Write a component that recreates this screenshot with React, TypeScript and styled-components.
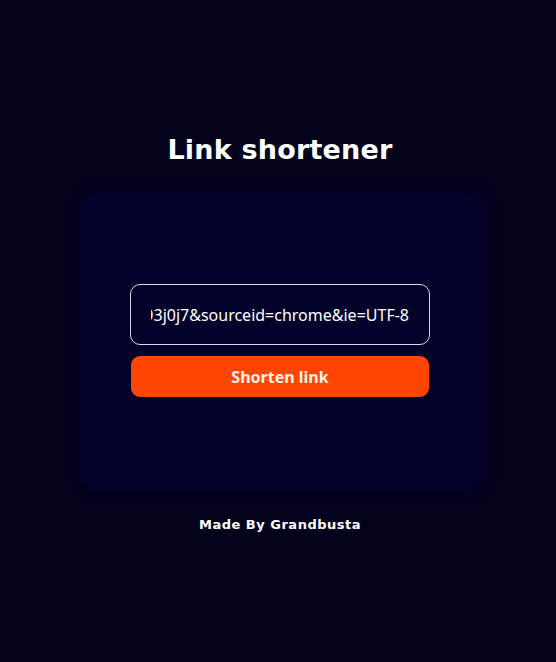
import React from "react";
import styled, { createGlobalStyle } from "styled-components";

const Global = createGlobalStyle`
  html, body { margin: 0; padding: 0; background: #03021d; }
  body { min-height: 662px; }
`;

const Page = styled.main`
  min-height: 662px;
  display: flex;
  flex-direction: column;
  align-items: center;
  padding-top: 130px;
  padding-left: 4px;
  box-sizing: border-box;
`;

const Title = styled.h1`
  margin: 0;
  font-family: "Comic Sans MS", "DejaVu Sans", sans-serif;
  font-weight: bold;
  font-size: 27px;
  line-height: 40px;
  color: #ffffff;
  letter-spacing: 0.2px;
`;

const Card = styled.section`
  margin-top: 23px;
  width: 400px;
  height: 297px;
  background: #03022a;
  border-radius: 16px;
  box-shadow: 4px 0 10px 2px #030225;
  display: flex;
  flex-direction: column;
  align-items: center;
  padding-top: 91px;
  box-sizing: border-box;
  gap: 11px;
`;

const Input = styled.input`
  width: 300px;
  height: 61px;
  box-sizing: border-box;
  background: transparent;
  border: 1px solid #d8d8e8;
  border-radius: 10px;
  color: #ffffff;
  font-family: "Noto Sans", sans-serif;
  font-size: 16px;
  padding: 0 20px;
  outline: none;
  text-align: right;
  direction: rtl;
  caret-color: #ffffff;
`;

const Button = styled.button`
  width: 298px;
  height: 41px;
  border: none;
  border-radius: 9px;
  background: #ff4500;
  color: #fff4ec;
  font-family: "Noto Sans", sans-serif;
  font-weight: bold;
  font-size: 16px;
  cursor: pointer;
`;

const Footer = styled.p`
  margin: 27px 0 0;
  font-family: "Comic Sans MS", "DejaVu Sans", sans-serif;
  font-weight: bold;
  font-size: 13px;
  color: #ffffff;
  letter-spacing: 0.5px;
`;

export default function App() {
  return (
    <>
      <Global />
      <Page>
        <Title>Link shortener</Title>
        <Card>
          <Input
            type="text"
            readOnly
            value={"93j0j7&sourceid=chrome&ie=UTF-8"}
          />
          <Button>Shorten link</Button>
        </Card>
        <Footer>Made By Grandbusta</Footer>
      </Page>
    </>
  );
}
